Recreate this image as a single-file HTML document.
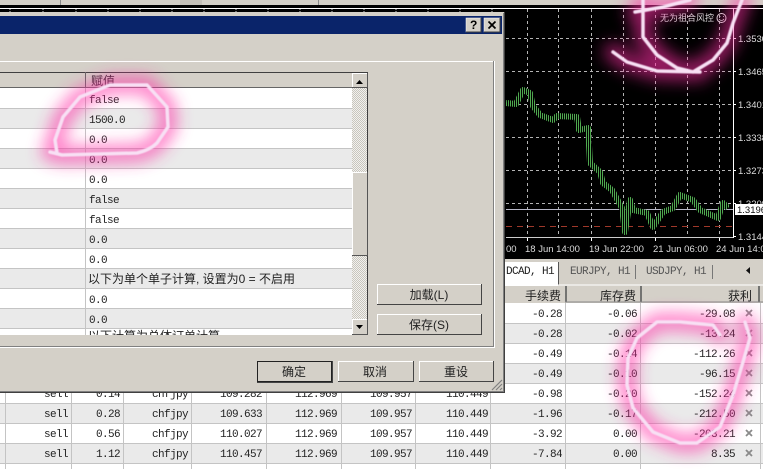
<!DOCTYPE html>
<html><head><meta charset="utf-8"><style>
html,body{margin:0;padding:0;background:#d4d0c8;width:763px;height:469px;overflow:hidden}
svg{display:block}
text{font-family:"Liberation Mono","WenQuanYi Zen Hei",monospace;font-size:11px;letter-spacing:-.6px;fill:#222}
.c{font-family:"Liberation Sans","WenQuanYi Zen Hei","Noto Sans CJK SC",sans-serif;font-size:12px;letter-spacing:0}
.h{font-family:"Liberation Sans","WenQuanYi Zen Hei","Noto Sans CJK SC",sans-serif;font-size:12px;letter-spacing:0;fill:#222}
.p{font-family:"Liberation Sans",sans-serif;fill:#ddd;font-size:9.500px;letter-spacing:0}
.e text{text-anchor:end}
.m text{text-anchor:middle}
</style></head><body>
<svg width="763" height="469" viewBox="0 0 763 469" xmlns="http://www.w3.org/2000/svg">
<defs>
<pattern id="d" width="2" height="2" patternUnits="userSpaceOnUse"><rect width="2" height="2" fill="#f2f1ee"/><rect width="1" height="1" fill="#c8c5bd"/><rect x="1" y="1" width="1" height="1" fill="#c8c5bd"/></pattern>
<pattern id="g" width="2" height="4" patternUnits="userSpaceOnUse"><rect width="2" height="4" fill="#000"/><rect width="1" height="4" fill="#4fa84f"/></pattern>
<filter id="b1" x="-40%" y="-40%" width="180%" height="180%"><feGaussianBlur stdDeviation="8"/></filter>
<filter id="b2" x="-40%" y="-40%" width="180%" height="180%"><feGaussianBlur stdDeviation="0.6"/></filter>
</defs>
<rect width="763" height="469" fill="#d4d0c8"/>
<!-- top toolbar -->
<g fill="#8a8a8a"><rect x="60" y="0" width="1" height="5"/><rect x="318" y="0" width="1" height="5"/><rect x="180" y="0" width="22" height="5" fill="#c4c0b8"/></g>
<rect x="0" y="5" width="763" height="3" fill="#000"/>
<rect x="0" y="8" width="763" height="1" fill="#fff"/>
<rect x="0" y="9" width="505" height="3" fill="#000"/>
<g stroke="#ccc" stroke-dasharray="1 1"><path d="M10 9v3M43 9v3M76 9v3M108 9v3M140 9v3M172 9v3M204 9v3M236 9v3M268 9v3M300 9v3M332 9v3M364 9v3M396 9v3M428 9v3M460 9v3M492 9v3"/></g>
<!-- chart -->
<rect x="505" y="9" width="258" height="250" fill="#000"/>
<rect x="733" y="9" width="1" height="229" fill="#fff"/>
<g stroke="#b4b4b4" stroke-width="1" stroke-dasharray="3 3" fill="none">
<path d="M506 38.500H733M506 71.500H733M506 104.500H733M506 137.500H733M506 170.500H733M506 203.500H733"/>
<path d="M527.500 9V238M558.500 9V238M591.500 9V238M623.500 9V238M655.500 9V238M687.500 9V238M719.500 9V238"/>
</g>
<path d="M506 237.500H733" stroke="#ccc"/>
<path d="M506 209.500H733" stroke="#b8b8c8"/>
<path d="M506 226.500H733" stroke="#a0382a" stroke-dasharray="6 5"/>
<polyline fill="none" stroke="url(#g)" stroke-width="6" stroke-linejoin="round" points="506,103 516,104 523,90 530,93 533,106 540,115 553,120 557,116 577,117 579,130 588,128 590,163 600,172 603,183 612,190 622,208 625,232 630,200 633,210 647,213 653,227 663,212 673,208 680,195 693,200 700,210 718,218 723,203 728,208"/>
<g stroke="#fff"><path d="M733 38.500h3M733 71.500h3M733 104.500h3M733 137.500h3M733 170.500h3M733 203.500h3M733 236.500h3"/><path d="M527.500 238v3M591.500 238v3M655.500 238v3M719.500 238v3"/></g>
<g><text class="p" x="738" y="42">1.3530</text><text class="p" x="738" y="75">1.3465</text><text class="p" x="738" y="108">1.3401</text><text class="p" x="738" y="141">1.3338</text><text class="p" x="738" y="174">1.3273</text><text class="p" x="738" y="207">1.3209</text><text class="p" x="738" y="240">1.3144</text></g>
<rect x="735" y="204" width="28" height="11" fill="#fff"/>
<text class="p" x="737" y="213" style="fill:#111">1.3196</text>
<g><text class="p" x="506" y="252">00</text><text class="p" x="525" y="252">18 Jun 14:00</text><text class="p" x="589" y="252">19 Jun 22:00</text><text class="p" x="653" y="252">21 Jun 06:00</text><text class="p" x="716" y="252">24 Jun 14:00</text></g>
<text class="c" x="660" y="21" style="font-size:9px;fill:#ddd">无为祖合风控</text>
<circle cx="721.500" cy="18" r="4.500" fill="none" stroke="#ddd"/><path d="M719 19q2.500 3 5 0M719.500 16.500h1M723 16.500h1" fill="none" stroke="#ddd" stroke-width=".8"/>
<!-- tabs -->
<rect x="505" y="259" width="258" height="27" fill="#d4d0c8"/>
<rect x="505" y="262" width="53" height="24" fill="#fff"/>
<path d="M558.500 262V285" stroke="#555"/>
<path d="M558 285H763" stroke="#fff"/>
<path d="M635.500 265V279M712.500 265V279" stroke="#777"/>
<text x="506" y="274" style="fill:#222">DCAD, H1</text>
<text x="570" y="274" style="fill:#555">EURJPY, H1</text>
<text x="646" y="274" style="fill:#555">USDJPY, H1</text>
<path d="M746 270.500l4-3.500v7z" fill="#111"/>
<!-- bottom table -->
<g fill="#fff"><rect y="303" width="763" height="20"/><rect y="343" width="763" height="20"/><rect y="383" width="763" height="20"/><rect y="423" width="763" height="20"/><rect y="463" width="763" height="6"/></g>
<g fill="#eaeaea"><rect y="323" width="763" height="20"/><rect y="363" width="763" height="20"/><rect y="403" width="763" height="20"/><rect y="443" width="763" height="20"/></g>
<g stroke="#c4c4c4"><path d="M0 323.500H763M0 343.500H763M0 363.500H763M0 383.500H763M0 403.500H763M0 423.500H763M0 443.500H763M0 463.500H763"/><path d="M5.500 303V469M71.500 303V469M123.500 303V469M191.500 303V469M266.500 303V469M341.500 303V469M415.500 303V469M490.500 303V469M565.500 303V469M640.500 303V469M760.500 303V469"/></g>
<path d="M566 286v16M641 286v16M759 286v16" stroke="#555" stroke-width="1.500"/>
<path d="M565 302H763" stroke="#888"/>
<g class="e">
<text class="h" x="561" y="300">手续费</text><text class="h" x="636" y="300">库存费</text><text class="h" x="752" y="300">获利</text>
<g transform="translate(0,-1)">
<text x="562" y="318">-0.28</text><text x="637" y="318">-0.06</text><text x="735" y="318">-29.08</text>
<text x="562" y="338">-0.28</text><text x="637" y="338">-0.02</text><text x="735" y="338">-13.24</text>
<text x="562" y="358">-0.49</text><text x="637" y="358">-0.14</text><text x="735" y="358">-112.26</text>
<text x="562" y="378">-0.49</text><text x="637" y="378">-0.10</text><text x="735" y="378">-96.15</text>
<text x="68" y="398">sell</text><text x="120" y="398">0.14</text><text x="188" y="398">chfjpy</text><text x="262" y="398">109.282</text><text x="337" y="398">112.969</text><text x="412" y="398">109.957</text><text x="488" y="398">110.449</text><text x="562" y="398">-0.98</text><text x="637" y="398">-0.20</text><text x="735" y="398">-152.24</text>
<text x="68" y="418">sell</text><text x="120" y="418">0.28</text><text x="188" y="418">chfjpy</text><text x="262" y="418">109.633</text><text x="337" y="418">112.969</text><text x="412" y="418">109.957</text><text x="488" y="418">110.449</text><text x="562" y="418">-1.96</text><text x="637" y="418">-0.17</text><text x="735" y="418">-212.50</text>
<text x="68" y="438">sell</text><text x="120" y="438">0.56</text><text x="188" y="438">chfjpy</text><text x="262" y="438">110.027</text><text x="337" y="438">112.969</text><text x="412" y="438">109.957</text><text x="488" y="438">110.449</text><text x="562" y="438">-3.92</text><text x="637" y="438">0.00</text><text x="735" y="438">-203.21</text>
<text x="68" y="458">sell</text><text x="120" y="458">1.12</text><text x="188" y="458">chfjpy</text><text x="262" y="458">110.457</text><text x="337" y="458">112.969</text><text x="412" y="458">109.957</text><text x="488" y="458">110.449</text><text x="562" y="458">-7.84</text><text x="637" y="458">0.00</text><text x="735" y="458">8.35</text>
</g>
</g>
<g stroke="#8a8a8a" stroke-width="1.800"><path d="M746 310l6 6M752 310l-6 6M746 330l6 6M752 330l-6 6M746 350l6 6M752 350l-6 6M746 370l6 6M752 370l-6 6M746 390l6 6M752 390l-6 6M746 410l6 6M752 410l-6 6M746 430l6 6M752 430l-6 6M746 450l6 6M752 450l-6 6"/></g>
<!-- dialog -->
<rect x="0" y="12" width="505" height="381" fill="#d4d0c8"/>
<path d="M504.500 12V393M0 392.500H505" stroke="#404040"/>
<path d="M0 391.500H504M503.500 13V392" stroke="#808080"/>
<rect x="0" y="16" width="502" height="18" fill="#0a246a"/>
<g><rect x="466" y="18" width="15" height="14" fill="#d4d0c8" stroke="#fff" stroke-width=".5"/><rect x="484" y="18" width="16" height="14" fill="#d4d0c8" stroke="#fff" stroke-width=".5"/>
<path d="M466 32h15v-14M484 32h16v-14" fill="none" stroke="#404040"/>
<text x="470" y="29" style="font-family:'Liberation Sans';font-size:12px;font-weight:bold;letter-spacing:0;fill:#000">?</text>
<path d="M488.500 21.500l7 7M495.500 21.500l-7 7" stroke="#000" stroke-width="1.700"/></g>
<!-- group box -->
<path d="M0 61.500H493" stroke="#fff"/>
<path d="M493.500 61V346M0 346.500H494" stroke="#808080"/>
<path d="M494.500 61V347M0 347.500H495" stroke="#fff"/>
<!-- list -->
<rect x="0" y="72" width="368" height="263" fill="#fff"/>
<rect x="0" y="72" width="352" height="16" fill="#d4d0c8"/>
<path d="M0 72.500H368M367.500 72V335" stroke="#404040"/>
<path d="M0 87.500H352" stroke="#666"/>
<g fill="#eaeaea"><rect y="108" width="352" height="20"/><rect y="148" width="352" height="20"/><rect y="188" width="352" height="20"/><rect y="228" width="352" height="20"/><rect y="268" width="352" height="20"/><rect y="308" width="352" height="20"/></g>
<g stroke="#c4c4c4"><path d="M0 108.500H352M0 128.500H352M0 148.500H352M0 168.500H352M0 188.500H352M0 208.500H352M0 228.500H352M0 248.500H352M0 268.500H352M0 288.500H352M0 308.500H352M0 328.500H352"/><path d="M85.500 88V335"/></g>
<path d="M85.500 72V87" stroke="#666"/>
<text class="h" x="91" y="85">赋值</text>
<text x="89" y="103">false</text><text x="89" y="123">1500.0</text><text x="89" y="143">0.0</text><text x="89" y="163">0.0</text><text x="89" y="183">0.0</text><text x="89" y="203">false</text><text x="89" y="223">false</text><text x="89" y="243">0.0</text><text x="89" y="263">0.0</text>
<text class="h" x="88" y="283">以下为单个单子计算, 设置为0 = 不启用</text>
<text x="89" y="303">0.0</text><text x="89" y="323">0.0</text>
<text class="h" x="88" y="340">以下计算为总体订单计算</text>
<rect x="0" y="335" width="493" height="11" fill="#d4d0c8"/>
<!-- scrollbar -->
<rect x="352" y="88" width="15" height="247" fill="url(#d)"/>
<rect x="352" y="172" width="15" height="83" fill="#d4d0c8"/><path d="M352.500 255V172.500H367" stroke="#fff" fill="none"/><path d="M352 255.500H367.500V172" stroke="#555" fill="none"/>
<rect x="352" y="73" width="15" height="15" fill="#d4d0c8"/><path d="M352.500 88V73.500H367" stroke="#fff" fill="none"/><path d="M352 87.500H367.500V73" stroke="#555" fill="none"/><path d="M356 84h7l-3.500-4z" fill="#000"/>
<rect x="352" y="319" width="15" height="15" fill="#d4d0c8"/><path d="M352.500 334V319.500H367" stroke="#fff" fill="none"/><path d="M352 334.500H367.500V319" stroke="#555" fill="none"/><path d="M356 325h7l-3.500 4z" fill="#000"/>
<!-- buttons -->
<g fill="#d4d0c8">
<rect x="377" y="284" width="104" height="20"/><rect x="377" y="314" width="104" height="20"/><rect x="257.500" y="361.500" width="74" height="20" stroke="#222"/><rect x="338" y="361" width="75" height="20"/><rect x="419" y="361" width="74" height="20"/>
</g>
<g fill="none"><path d="M377.500 304V284.500H481M338.500 381V361.500H413M419.500 381V361.500H493" stroke="#fff"/><path d="M377 304.500H481.500V284M377 334.500H481.500V314M338 381.500H413.500V361M419 381.500H493.500V361M257 382.500H332.500V361" stroke="#444"/><path d="M377.500 334V314.500H481" stroke="#fff"/></g>
<g class="m"><text class="c" x="429" y="299" style="fill:#222">加载(L)</text><text class="c" x="429" y="329" style="fill:#222">保存(S)</text><text class="c" x="294" y="376" style="fill:#222">确定</text><text class="c" x="375" y="376" style="fill:#222">取消</text><text class="c" x="456" y="376" style="fill:#222">重设</text></g>
<path d="M492 390l10-10M496 390l6-6M500 390l2-2" stroke="#808080" stroke-width="1.200"/>
<!-- scribbles -->
<g fill="none" stroke-linecap="round" stroke-linejoin="round">
<g stroke="#ff2fa5" stroke-width="18" opacity=".6" filter="url(#b1)">
<path d="M50 152L62 155L137 153Q150 150 157 143L168 127L167 107L147 85H110L80 97L63 117L55 140L57 153"/>
<path d="M635 12L663 7L690 0M643 0V37L657 55L677 68L693 72L713 60L727 43L733 23L742 0M613 52L627 62L657 71L700 72"/>
<path d="M720 335L713 325L680 322H657L637 338L628 358L627 385L633 408L653 432L680 443H697L720 427L733 395L743 362L750 338L745 322"/>
</g>
<g stroke="#f8e0f4" stroke-width="3.500" filter="url(#b2)">
<path d="M50 152L62 155L137 153Q150 150 157 143L168 127L167 107L147 85H110L80 97L63 117L55 140L57 153"/>
<path d="M635 12L663 7L690 0M643 0V37L657 55L677 68L693 72L713 60L727 43L733 23L742 0M613 52L627 62L657 71L700 72"/>
<path d="M720 335L713 325L680 322H657L637 338L628 358L627 385L633 408L653 432L680 443H697L720 427L733 395L743 362L750 338L745 322"/>
</g>
</g>
</svg>
</body></html>
